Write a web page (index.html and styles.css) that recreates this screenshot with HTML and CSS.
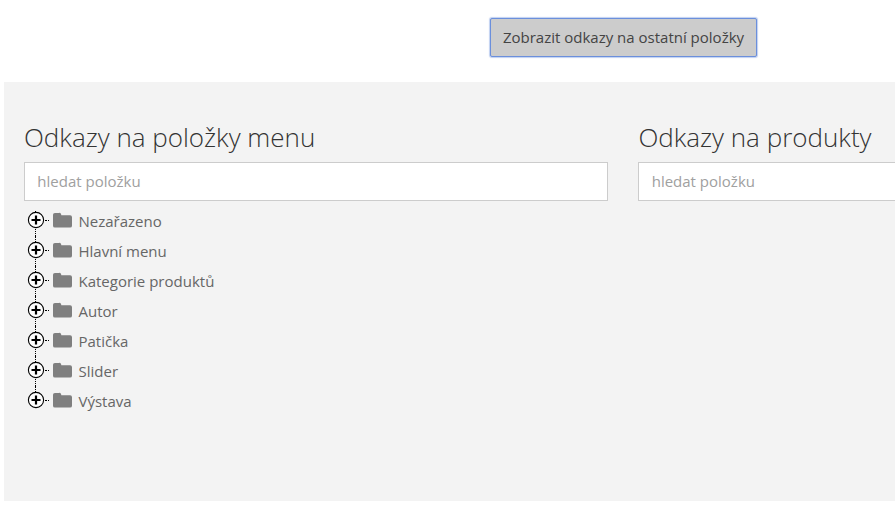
FILE: index.html
```html
<!DOCTYPE html>
<html lang="cs">
<head>
<meta charset="utf-8">
<title>Odkazy</title>
<link rel="stylesheet" href="styles.css">
</head>
<body>
<div class="top">
  <button class="show-btn" type="button">Zobrazit odkazy na ostatní položky</button>
</div>
<main class="panel">
  <section class="col">
    <h2>Odkazy na položky menu</h2>
    <input class="search" type="text" placeholder="hledat položku">
    <ul class="tree">
      <li><svg class="toggle" viewBox="0 0 18 18"><circle cx="9" cy="9" r="7.6"/><path d="M4.5 9h9M9 4.500v9"/></svg><i class="dots"></i><svg class="folder" viewBox="0 0 20 16"><path d="M2 .5h4.500a2 2 0 0 1 2 1.500l.3 1H18a2 2 0 0 1 2 2V14a2 2 0 0 1-2 2H2a2 2 0 0 1-2-2V2.500a2 2 0 0 1 2-2z"/></svg><span>Nezařazeno</span></li>
      <li><svg class="toggle" viewBox="0 0 18 18"><circle cx="9" cy="9" r="7.6"/><path d="M4.5 9h9M9 4.500v9"/></svg><i class="dots"></i><svg class="folder" viewBox="0 0 20 16"><path d="M2 .5h4.500a2 2 0 0 1 2 1.500l.3 1H18a2 2 0 0 1 2 2V14a2 2 0 0 1-2 2H2a2 2 0 0 1-2-2V2.500a2 2 0 0 1 2-2z"/></svg><span>Hlavní menu</span></li>
      <li><svg class="toggle" viewBox="0 0 18 18"><circle cx="9" cy="9" r="7.6"/><path d="M4.5 9h9M9 4.500v9"/></svg><i class="dots"></i><svg class="folder" viewBox="0 0 20 16"><path d="M2 .5h4.500a2 2 0 0 1 2 1.500l.3 1H18a2 2 0 0 1 2 2V14a2 2 0 0 1-2 2H2a2 2 0 0 1-2-2V2.500a2 2 0 0 1 2-2z"/></svg><span>Kategorie produktů</span></li>
      <li><svg class="toggle" viewBox="0 0 18 18"><circle cx="9" cy="9" r="7.6"/><path d="M4.5 9h9M9 4.500v9"/></svg><i class="dots"></i><svg class="folder" viewBox="0 0 20 16"><path d="M2 .5h4.500a2 2 0 0 1 2 1.500l.3 1H18a2 2 0 0 1 2 2V14a2 2 0 0 1-2 2H2a2 2 0 0 1-2-2V2.500a2 2 0 0 1 2-2z"/></svg><span>Autor</span></li>
      <li><svg class="toggle" viewBox="0 0 18 18"><circle cx="9" cy="9" r="7.6"/><path d="M4.5 9h9M9 4.500v9"/></svg><i class="dots"></i><svg class="folder" viewBox="0 0 20 16"><path d="M2 .5h4.500a2 2 0 0 1 2 1.500l.3 1H18a2 2 0 0 1 2 2V14a2 2 0 0 1-2 2H2a2 2 0 0 1-2-2V2.500a2 2 0 0 1 2-2z"/></svg><span>Patička</span></li>
      <li><svg class="toggle" viewBox="0 0 18 18"><circle cx="9" cy="9" r="7.6"/><path d="M4.5 9h9M9 4.500v9"/></svg><i class="dots"></i><svg class="folder" viewBox="0 0 20 16"><path d="M2 .5h4.500a2 2 0 0 1 2 1.500l.3 1H18a2 2 0 0 1 2 2V14a2 2 0 0 1-2 2H2a2 2 0 0 1-2-2V2.500a2 2 0 0 1 2-2z"/></svg><span>Slider</span></li>
      <li><svg class="toggle" viewBox="0 0 18 18"><circle cx="9" cy="9" r="7.6"/><path d="M4.5 9h9M9 4.500v9"/></svg><i class="dots"></i><svg class="folder" viewBox="0 0 20 16"><path d="M2 .5h4.500a2 2 0 0 1 2 1.500l.3 1H18a2 2 0 0 1 2 2V14a2 2 0 0 1-2 2H2a2 2 0 0 1-2-2V2.500a2 2 0 0 1 2-2z"/></svg><span>Výstava</span></li>
    </ul>
  </section>
  <section class="col">
    <h2>Odkazy na produkty</h2>
    <input class="search" type="text" placeholder="hledat položku">
  </section>
</main>
</body>
</html>
```

FILE: styles.css
```css
* { box-sizing: border-box; }
html, body { margin: 0; padding: 0; height: 509px; overflow: hidden; background: #fff; }
body { font-family: "Open Sans", sans-serif; color: #444; }
.top { height: 82px; padding: 18px 0 0 490px; }
.show-btn {
  display: block;
  width: 267px;
  height: 39px;
  padding: 0;
  background: #ccc;
  border: 1px solid #6b8fdc;
  border-radius: 2px;
  box-shadow: 0 0 1px 1px rgba(115, 150, 222, .45);
  font: 15px/1 "Open Sans", sans-serif;
  color: #444;
}
.panel {
  display: flex;
  gap: 30.4px;
  height: 419px;
  margin-left: 4px;
  padding: 38px 0 0 20px;
  background: #f3f3f3;
  overflow: hidden;
}
.col { width: 584px; flex: none; }
h2 {
  margin: 0;
  height: 42px;
  font-size: 26px;
  line-height: 34px;
  font-weight: 300;
  color: #333;
}
.search {
  display: block;
  width: 100%;
  height: 39px;
  padding: 0 12px 2px 12.3px;
  background: #fff;
  border: 1px solid #ccc;
  font: 15px "Open Sans", sans-serif;
  color: #444;
  outline: none;
}
.search::placeholder { color: #a0a0a0; opacity: 1; }
.tree {
  list-style: none;
  margin: 0;
  padding: 5px 0 0 3px;
}
.tree li {
  position: relative;
  display: flex;
  align-items: center;
  height: 30px;
  font-size: 15px;
  color: #666;
}
.tree li::before {
  content: "";
  position: absolute;
  left: 8px;
  top: 0;
  height: 30px;
  border-left: 1px dotted #000;
}
.tree li:first-child::before { top: 5px; height: 25px; }
.tree li:last-child::before { height: 8px; }
.toggle {
  position: relative;
  flex: none;
  width: 18px;
  height: 18px;
  margin-top: -2px;
  fill: #fff;
  stroke: #000;
}
.toggle circle { stroke-width: 1.1; }
.toggle path { stroke-width: 2.2; fill: none; }
.dots {
  flex: none;
  width: 4px;
  height: 0;
  margin: -2px 4px 0 0;
  border-top: 1px dotted #000;
}
.folder {
  flex: none;
  width: 19px;
  height: 16px;
  margin: -2px 6.5px 0 0;
  fill: #7f7f7f;
}
```
